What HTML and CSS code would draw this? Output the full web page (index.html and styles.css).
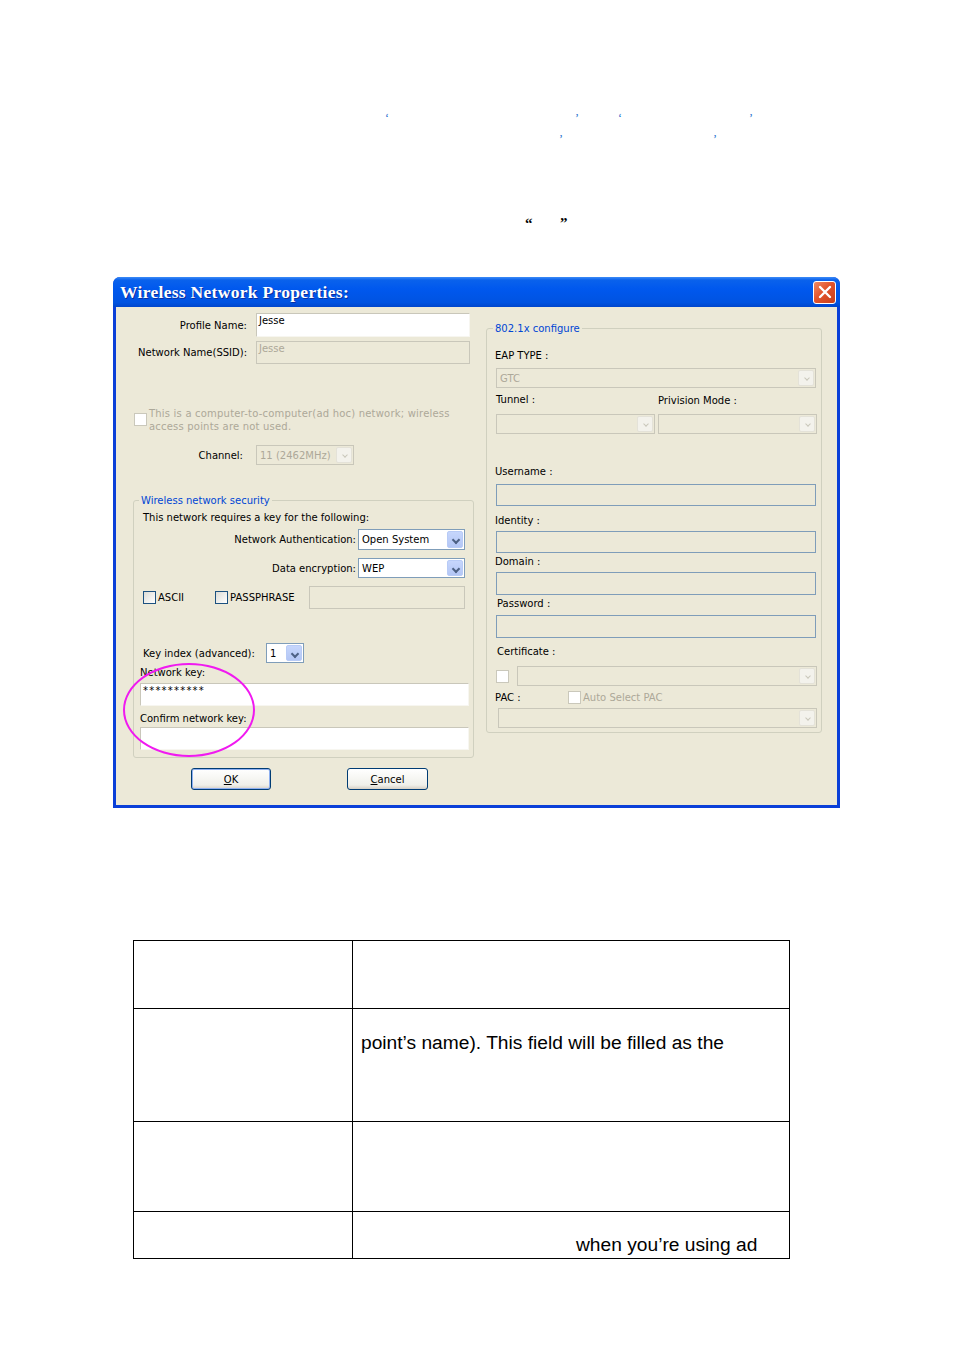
FILE: index.html
```html
<!DOCTYPE html>
<html lang="en">
<head>
    <meta charset="UTF-8">
    <title>Wireless Network Properties</title>
    <link rel="stylesheet" href="styles.css">
</head>
<body>
    <div class="page">
        <!-- stray punctuation left over from the document text -->
        <div class="marks marks-1">
            <span class="mk mk-a">&lsquo;</span><span class="mk mk-b">&rsquo;</span><span class="mk mk-c">&lsquo;</span><span class="mk mk-d">&rsquo;</span>
        </div>
        <div class="marks marks-2">
            <span class="mk mk-e">&rsquo;</span><span class="mk mk-f">&rsquo;</span>
        </div>
        <div class="marks marks-3">
            <span class="qt qt-a">&ldquo;</span><span class="qt qt-b">&rdquo;</span>
        </div>

        <div class="dialog">
            <div class="titlebar">
                <span class="title">Wireless Network Properties:</span>
                <span class="close-btn">
                    <svg width="14" height="14" viewBox="0 0 14 14"><path d="M2 2 L12 12 M12 2 L2 12" stroke="#fff" stroke-width="2.4" stroke-linecap="round"/></svg>
                </span>
            </div>
            <div class="dlg-body">
                <div class="col-left">
                    <div class="row row-profile">
                        <label class="lbl lbl-profile">Profile Name:</label>
                        <div class="field field-white w-profile">Jesse</div>
                    </div>
                    <div class="row row-ssid">
                        <label class="lbl lbl-profile">Network Name(SSID):</label>
                        <div class="field field-off w-profile">Jesse</div>
                    </div>
                    <div class="row row-adhoc">
                        <span class="chk chk-off"></span>
                        <span class="adhoc-text">This is a computer-to-computer(ad hoc) network; wireless<br>access points are not used.</span>
                    </div>
                    <div class="row row-channel">
                        <label class="lbl lbl-channel">Channel:</label>
                        <div class="select select-off w-channel"><span class="sel-val">11 (2462MHz)</span><span class="arrow arrow-off"></span></div>
                    </div>

                    <div class="group group-sec">
                        <span class="legend">Wireless network security</span>
                        <div class="sec-intro">This network requires a key for the following:</div>
                        <div class="row row-auth">
                            <label class="lbl">Network Authentication:</label>
                            <div class="select select-on w-auth"><span class="sel-val">Open System</span><span class="arrow arrow-on"></span></div>
                        </div>
                        <div class="row row-enc">
                            <label class="lbl">Data encryption:</label>
                            <div class="select select-on w-auth"><span class="sel-val">WEP</span><span class="arrow arrow-on"></span></div>
                        </div>
                        <div class="row row-ascii">
                            <span class="chk chk-on"></span><span class="chk-text">ASCII</span>
                            <span class="chk chk-on chk-pass"></span><span class="chk-text">PASSPHRASE</span>
                            <div class="field field-off w-pass"></div>
                        </div>
                        <div class="row row-keyidx">
                            <label class="lbl-keyidx">Key index (advanced):</label>
                            <div class="select select-on w-keyidx"><span class="sel-val">1</span><span class="arrow arrow-on"></span></div>
                        </div>
                        <div class="key-label key-label-1">Network key:</div>
                        <div class="field field-white w-key key-stars">**********</div>
                        <div class="key-label key-label-2">Confirm network key:</div>
                        <div class="field field-white w-key"></div>
                    </div>

                    <div class="buttons">
                        <button class="btn btn-ok"><u>O</u>K</button>
                        <button class="btn btn-cancel"><u>C</u>ancel</button>
                    </div>
                </div>

                <div class="col-right">
                    <div class="group group-8021x">
                        <span class="legend">802.1x configure</span>
                        <div class="r-label r-eap">EAP TYPE :</div>
                        <div class="select select-off w-full r-gtc"><span class="sel-val">GTC</span><span class="arrow arrow-off"></span></div>
                        <div class="r-pair">
                            <span class="r-half">Tunnel :</span>
                            <span class="r-half r-prov">Privision Mode :</span>
                        </div>
                        <div class="r-selects">
                            <div class="select select-off w-half"><span class="sel-val"></span><span class="arrow arrow-off"></span></div>
                            <div class="select select-off w-half"><span class="sel-val"></span><span class="arrow arrow-off"></span></div>
                        </div>
                        <div class="r-label r-user">Username :</div>
                        <div class="field field-blue w-full r-in-user"></div>
                        <div class="r-label r-ident">Identity :</div>
                        <div class="field field-blue w-full r-in-ident"></div>
                        <div class="r-label r-domain">Domain :</div>
                        <div class="field field-blue w-full r-in-domain"></div>
                        <div class="r-label r-pass">Password :</div>
                        <div class="field field-blue w-full r-in-pass"></div>
                        <div class="r-label r-cert">Certificate :</div>
                        <div class="r-cert-row">
                            <span class="chk chk-white"></span>
                            <div class="select select-off w-cert"><span class="sel-val"></span><span class="arrow arrow-off"></span></div>
                        </div>
                        <div class="r-pac-row">
                            <span class="pac-label">PAC :</span>
                            <span class="chk chk-off"></span>
                            <span class="pac-auto">Auto Select PAC</span>
                        </div>
                        <div class="select select-off w-pac"><span class="sel-val"></span><span class="arrow arrow-off"></span></div>
                    </div>
                </div>
            </div>
            <span class="highlight"></span>
        </div>

        <table class="doc-table">
            <tr class="tr-1"><td class="c-left"></td><td class="c-right"></td></tr>
            <tr class="tr-2"><td class="c-left"></td><td class="c-right"><p class="cell-text">point&rsquo;s name). This field will be filled as the</p></td></tr>
            <tr class="tr-3"><td class="c-left"></td><td class="c-right"></td></tr>
            <tr class="tr-4"><td class="c-left"></td><td class="c-right"><p class="cell-text cell-tail">when you&rsquo;re using ad</p></td></tr>
        </table>
    </div>
</body>
</html>
```

FILE: styles.css
```css
body {
    margin: 0;
    background: #fff;
    font-family: 'Liberation Sans', Arial, sans-serif;
}
.page {
    width: 954px;
    height: 1350px;
    padding-top: 110px;
    box-sizing: border-box;
}

/* leftover punctuation */
.marks {
    display: flex;
    height: 21px;
    font-family: 'Liberation Serif', serif;
    font-size: 12px;
    line-height: 16px;
    color: #1a6ccc;
}
.marks-3 {
    margin-top: 63px;
    font-family: 'Liberation Serif', serif;
    font-size: 15px;
    font-weight: bold;
    color: #000;
}
.mk, .qt {
    width: 6px;
}
.mk-a { margin-left: 385px; }
.mk-b { margin-left: 184px; }
.mk-c { margin-left: 37px; }
.mk-d { margin-left: 125px; }
.mk-e { margin-left: 559px; }
.mk-f { margin-left: 148px; }
.qt-a { margin-left: 525px; }
.qt-b { margin-left: 29px; }

/* dialog */
.dialog {
    position: relative;
    width: 727px;
    margin: 41px 0 0 113px;
    background: #0a3fd8;
    border-radius: 7px 7px 0 0;
    padding: 0 3px 3px 3px;
    box-sizing: border-box;
    font-family: 'DejaVu Sans', Tahoma, sans-serif;
    font-size: 10px;
    color: #000;
}
.titlebar {
    display: flex;
    align-items: center;
    justify-content: space-between;
    height: 30px;
    margin: 0 -3px;
    padding: 0 4px 0 7px;
    border-radius: 7px 7px 0 0;
    background: linear-gradient(#3d8cf7 0, #0a62ec 3px, #0058ee 40%, #0053e1 85%, #0046cc 100%);
}
.title {
    font-family: 'Liberation Serif', 'Times New Roman', serif;
    font-weight: bold;
    font-size: 17.5px;
    color: #fff;
    letter-spacing: 0.3px;
    text-shadow: 1px 1px 0 #0a2fa0;
}
.close-btn {
    display: flex;
    align-items: center;
    justify-content: center;
    width: 21px;
    height: 21px;
    border: 1px solid #fff;
    border-radius: 3px;
    background: linear-gradient(135deg, #f08a66 0, #e2542c 45%, #c8401c 100%);
}
.dlg-body {
    display: flex;
    height: 498px;
    background: #ece9d8;
}
.col-left {
    width: 364px;
}
.col-right {
    padding-left: 6px;
}

.row {
    display: flex;
    align-items: center;
}
.lbl {
    text-align: right;
    white-space: nowrap;
    padding-right: 2px;
}
.lbl-profile {
    width: 131px;
    padding-right: 9px;
}
.lbl-channel {
    width: 127px;
    padding-right: 13px;
}
.row-profile { margin-top: 6px; height: 24px; }
.row-ssid { margin-top: 4px; height: 23px; }
.row-adhoc {
    margin-top: 43px;
    height: 26px;
    padding-left: 18px;
    color: #aca899;
    line-height: 13px;
    align-items: flex-start;
}
.row-adhoc .chk { margin-top: 6px; }
.adhoc-text { margin-left: 2px; letter-spacing: 0.2px; }
.row-channel { margin-top: 12px; height: 20px; }

.field {
    box-sizing: border-box;
    height: 100%;
    padding: 1px 2px;
    line-height: 12px;
}
.field-white {
    background: #fff;
    border: 1px solid #b5b2a5;
    border-color: #c9c7ba #f7f6f0 #f7f6f0 #c9c7ba;
}
.field-off {
    background: #ece9d8;
    border: 1px solid #c9c7ba;
    color: #aca899;
}
.field-blue {
    background: #ece9d8;
    border: 1px solid #7f9db9;
}
.w-profile { width: 214px; }

.select {
    display: flex;
    box-sizing: border-box;
    height: 20px;
    border: 1px solid #7f9db9;
    background: #fff;
    padding: 1px;
}
.select-off {
    border-color: #c9c7ba;
    background: #ece9d8;
    color: #aca899;
}
.sel-val {
    flex: 1;
    padding-left: 2px;
    line-height: 17px;
    white-space: nowrap;
    overflow: hidden;
}
.arrow {
    position: relative;
    width: 16px;
    border-radius: 2px;
}
.arrow::after {
    content: '';
    position: absolute;
    left: 5px;
    top: 5px;
    width: 4px;
    height: 4px;
    border-right: 2px solid #4d6185;
    border-bottom: 2px solid #4d6185;
    transform: rotate(45deg);
}
.arrow-on {
    background: linear-gradient(#c6d6fc, #b3c6f5);
    border: 1px solid #b8cbf6;
    box-sizing: border-box;
}
.arrow-off {
    background: #f3f2ec;
    border: 1px solid #e4e2d8;
    box-sizing: border-box;
}
.arrow-off::after {
    border-color: #c9c7ba;
    width: 3px;
    height: 3px;
    border-width: 0 1px 1px 0;
    left: 6px;
}
.w-channel { width: 98px; }
.w-auth { width: 107px; height: 21px; }
.row-enc .w-auth { height: 20px; }
.w-keyidx { width: 38px; }

.chk {
    display: inline-block;
    box-sizing: border-box;
    width: 13px;
    height: 13px;
    flex: none;
}
.chk-on {
    border: 1px solid #1c5180;
    background: linear-gradient(135deg, #dcdcd6, #fff);
}
.chk-off {
    border: 1px solid #cac8bb;
    background: #fff;
}
.chk-white {
    border: 1px solid #cac8bb;
    background: #fff;
}

/* group boxes */
.group {
    position: relative;
    box-sizing: border-box;
    border: 1px solid #d0d0bf;
    border-radius: 3px;
}
.legend {
    position: absolute;
    top: -7px;
    padding: 0 2px;
    background: #ece9d8;
    color: #0046d5;
    line-height: 13px;
    white-space: nowrap;
}
.group-sec {
    margin: 35px 0 0 17px;
    width: 341px;
    padding-bottom: 7px;
}
.group-sec .legend { left: 5px; }
.sec-intro {
    margin: 10px 0 0 9px;
    line-height: 13px;
}
.row-auth, .row-enc {
    justify-content: flex-end;
    padding-right: 8px;
}
.row-auth { margin-top: 5px; height: 21px; }
.row-enc { margin-top: 8px; height: 20px; }
.row-ascii {
    margin-top: 8px;
    height: 23px;
    padding-left: 9px;
}
.chk-text { margin-left: 2px; }
.chk-pass { margin-left: 31px; }
.w-pass { width: 156px; margin-left: auto; margin-right: 8px; }
.row-keyidx {
    margin-top: 34px;
    height: 20px;
    padding-left: 9px;
}
.lbl-keyidx { width: 123px; }
.key-label {
    margin-left: 6px;
    line-height: 13px;
}
.key-label-1 { margin-top: 3px; }
.key-label-2 { margin-top: 6px; }
.w-key {
    width: 329px;
    height: 23px;
    margin-left: 6px;
    margin-top: 4px;
}
.key-stars { letter-spacing: 1.2px; }
.key-label-2 + .w-key { margin-top: 2px; }

.buttons {
    display: flex;
    margin: 10px 0 0 75px;
    gap: 76px;
}
.btn {
    box-sizing: border-box;
    height: 22px;
    padding: 0;
    border: 1px solid #003c74;
    border-radius: 3px;
    background: linear-gradient(#ffffff, #f0f0ea 80%, #d6d0c5);
    font-family: inherit;
    font-size: 10px;
    color: #000;
}
.btn-ok {
    width: 80px;
    box-shadow: inset 0 0 0 1px #8fb0f0;
}
.btn-cancel { width: 81px; }

/* right group */
.group-8021x {
    margin-top: 21px;
    width: 336px;
    height: 405px;
}
.group-8021x .legend { left: 6px; }
.r-label {
    margin-left: 8px;
    line-height: 13px;
}
.r-eap { margin-top: 20px; }
.w-full { width: 320px; margin-left: 9px; }
.r-gtc { margin-top: 6px; }
.r-pair {
    display: flex;
    margin: 5px 0 0 9px;
    line-height: 13px;
}
.r-half { width: 162px; }
.r-prov { padding-top: 1px; }
.r-selects {
    display: flex;
    gap: 3px;
    margin: 7px 0 0 9px;
}
.w-half { width: 159px; }
.r-user { margin-top: 31px; }
.r-in-user { height: 22px; margin-top: 6px; }
.r-ident { margin-top: 8px; }
.r-in-ident { height: 22px; margin-top: 4px; }
.r-domain { margin-top: 2px; }
.r-in-domain { height: 23px; margin-top: 4px; }
.r-pass { margin-top: 2px; margin-left: 10px; }
.r-in-pass { height: 23px; margin-top: 5px; }
.r-cert { margin-top: 7px; margin-left: 10px; }
.r-cert-row {
    display: flex;
    align-items: center;
    margin: 8px 0 0 9px;
    height: 20px;
}
.w-cert { width: 300px; margin-left: 8px; }
.r-pac-row {
    display: flex;
    align-items: center;
    margin: 5px 0 0 8px;
    height: 13px;
}
.pac-label { width: 73px; }
.pac-auto { margin-left: 2px; color: #aca899; }
.w-pac { width: 319px; margin: 4px 0 0 11px; }

.highlight {
    position: absolute;
    left: 10px;
    top: 386px;
    width: 132px;
    height: 94px;
    box-sizing: border-box;
    border: 2px solid #f01af0;
    border-radius: 50%;
}

/* document table */
.doc-table {
    margin: 132px 0 0 133px;
    width: 657px;
    border-collapse: collapse;
}
.doc-table td {
    border: 1px solid #000;
    padding: 0;
    vertical-align: top;
}
.c-left { width: 218px; }
.tr-1 td { height: 67px; }
.tr-2 td { height: 112px; }
.tr-3 td { height: 89px; }
.tr-4 td { height: 46px; }
.cell-text {
    margin: 23px 0 0 8px;
    font-size: 19.2px;
    line-height: 22px;
    color: #000;
    white-space: nowrap;
}
.cell-tail {
    margin: 22px 0 0 223px;
}
```
